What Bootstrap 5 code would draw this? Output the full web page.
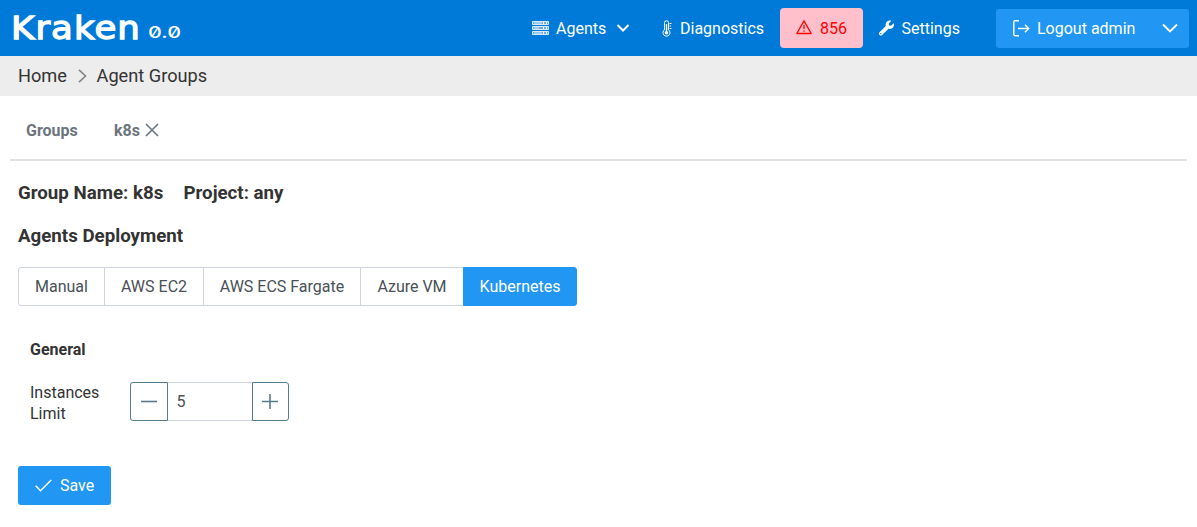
<!DOCTYPE html>
<html lang="en">
<head>
<meta charset="utf-8">
<title>Kraken</title>
<link href="https://cdn.jsdelivr.net/npm/bootstrap@5.3.0/dist/css/bootstrap.min.css" rel="stylesheet">
<style>
body{font-family:Roboto,sans-serif;font-size:16px;line-height:21px;color:#333;overflow:hidden}
svg{display:block;flex:none;fill:none;stroke:currentColor}
.topbar{height:56px;background:#007ad9;padding:0 8px 0 12px}
.brand-name{font:400 32px/40px "DejaVu Sans",sans-serif;-webkit-text-stroke:1.300px #fff;width:136px;letter-spacing:1px;transform:scaleX(1.11);transform-origin:0 50%;margin-left:-1px;margin-right:1px}
.brand-ver{font:500 16px/20px Inter,sans-serif;font-feature-settings:"zero";transform:scaleX(1.34);transform-origin:0 50%;margin-top:8px}
.it-agents{width:130px}.it-diag{width:118px}
.it-err{width:83px;height:40px;padding-left:16px;background:#ffc0cb;color:#f00;border-radius:4px}
.it-set{width:133px;padding-left:16px}
.logout{width:193px;height:39px;background:#2196f3;border-radius:3px;padding:0 11px 0 17px;color:#fff;border:0}
.crumbs{height:40px;background:#ededed;padding:0 0 2px 18px;font-size:18.2px}
.tabs-row{height:65px;margin:0 10px;border-bottom:2px solid #dee2e6;color:#6c757d;font-weight:700;padding:5px 0 0 16px}
.main-pane{padding:0 18px}
.headline{font-size:18.72px;font-weight:700;line-height:24px;margin:0}
.modes .btn{--bs-btn-border-radius:3px;height:39px;padding:0;font-size:16px;line-height:37px;border:1px solid #ced4da;color:#495057;flex:none}
.modes .btn.active{background:#2196f3;border-color:#2196f3;color:#fff}
.stepper{width:159px;height:39px}
.stepper .btn{width:38px;padding:0;border:1px solid #547c8c;color:#547c8c;display:flex;align-items:center;justify-content:center;border-radius:3px}
.stepper .form-control{border:1px solid #ced4da;border-width:1px 0;padding:0 9px;font-size:16px;color:#495057;height:39px}
.save{width:93px;height:39px;background:#2196f3;color:#fff;border-radius:3px;padding:0 0 0 17px;border:0;font-size:16px}
</style>
</head>
<body>
<nav class="topbar d-flex align-items-center text-white">
  <div class="brand-name">Kraken</div><div class="brand-ver">0.0</div>
  <div class="d-flex align-items-center ms-auto">
    <div class="it-agents d-flex align-items-center">
      <svg width="17" height="14" viewBox="0 0 17 14"><g stroke="#d9ebf9"><path d="M.5.5h16v3H.5zM.5 5.500h16v3H.5zM.5 10.500h16v3H.5z" fill="#65aee8"/><path d="M2 2h8M2 7h5M2 12h8" /><path d="M11 2h1M14 2h1M11 7h1M14 7h1M11 12h1M14 12h1" stroke="#fff" stroke-width="2"/></g></svg>
      <span style="margin-left:7px">Agents</span>
      <svg style="margin-left:10px" width="14" height="14" viewBox="0 0 14 14" stroke-width="2"><path d="M1.500 4 7 9.500l5.500-5.500"/></svg>
    </div>
    <div class="it-diag d-flex align-items-center">
      <svg width="11" height="17" viewBox="0 0 11 17"><path d="M2.500 9.800V2.700a2 2 0 0 1 4 0v7.100a3.500 3.500 0 1 1-4 0z"/><path d="M4.500 4v8" stroke-width="1.300"/><circle cx="4.500" cy="12.700" r="1.800" fill="#fff" stroke="none"/><path d="M7.500 3.500h2M7.500 6h1.500M7.500 8.500h2"/></svg>
      <span style="margin-left:7px">Diagnostics</span>
    </div>
    <div class="it-err d-flex align-items-center">
      <svg width="16" height="16" viewBox="0 0 16 16" stroke-width="1.300" stroke-linejoin="round"><path d="M8 .9.800 13.500h14.400z"/><path d="M8 5v4.200M8 10.500v1.300"/></svg>
      <span style="margin-left:8px">856</span>
    </div>
    <div class="it-set d-flex align-items-center">
      <svg width="15" height="16" viewBox="0 0 512 512" stroke="none"><path fill="#fff" stroke="none" d="M507.700 109.100c-2.200-9-13.500-12.100-20.100-5.500l-74.400 74.400-67.900-11.300-11.300-67.900 74.400-74.400c6.600-6.600 3.400-17.900-5.700-20.200-47.400-11.700-99.600.9-136.600 37.900-39.600 39.600-50.500 97.100-34.100 147.200L18.700 402.800c-25 25-25 65.500 0 90.500s65.500 25 90.500 0l213.200-213.200c50.100 16.700 107.500 5.700 147.400-34.200 37.100-37.100 49.700-89.300 37.900-136.800zM64 472a24 24 0 1 1 0-48 24 24 0 0 1 0 48z"/></svg>
      <span style="margin-left:7.500px">Settings</span>
    </div>
    <button class="logout d-flex align-items-center">
      <svg width="17" height="17" viewBox="0 0 17 17" stroke-width="1.400"><path d="M6 .8H2.200A1.400 1.400 0 0 0 .8 2.200v12.100a1.400 1.400 0 0 0 1.400 1.400H6M5 8.500h10.500M12 4.800l3.700 3.700-3.700 3.700"/></svg>
      <span style="margin-left:7px">Logout admin</span>
      <svg class="ms-auto" width="16" height="16" viewBox="0 0 16 16" stroke-width="1.900"><path d="M1 4.500l7 7 7-7"/></svg>
    </button>
  </div>
</nav>
<div class="crumbs d-flex align-items-center">
  <span>Home</span>
  <svg style="margin:2px 10px 0 10.600px" width="9" height="14" viewBox="0 0 9 14" stroke-width="1.600"><path d="M1 .8 7.500 7 1 13.200" stroke="#848484"/></svg>
  <span>Agent Groups</span>
</div>
<div class="tabs-row d-flex align-items-center">
  <span>Groups</span>
  <span style="margin-left:36.200px">k8s</span>
  <svg style="margin-left:5px" width="14" height="14" viewBox="0 0 14 14" stroke-width="1.600"><path d="m1 1 12 12M13 1 1 13"/></svg>
</div>
<main class="main-pane">
  <h3 class="headline d-flex" style="padding-top:20px"><span>Group Name: k8s</span><span style="margin-left:20.200px">Project: any</span></h3>
  <h3 class="headline" style="margin-top:19px">Agents Deployment</h3>
  <div class="modes btn-group d-flex" style="margin-top:19px">
    <button class="btn" style="width:87px">Manual</button>
    <button class="btn" style="width:100px">AWS EC2</button>
    <button class="btn" style="width:158px">AWS ECS Fargate</button>
    <button class="btn" style="width:104px">Azure VM</button>
    <button class="btn active" style="width:114px">Kubernetes</button>
  </div>
  <div style="padding:33px 0 0 12px">
    <div class="fw-bold">General</div>
    <div class="d-flex align-items-start" style="margin-top:22px">
      <label style="width:100px">Instances<br>Limit</label>
      <div class="stepper d-flex">
        <button class="btn rounded-end-0"><svg width="16" height="16" viewBox="0 0 16 16" stroke-width="1.600"><path d="M0 7.500h16"/></svg></button>
        <input class="form-control rounded-0" value="5" style="width:84px">
        <button class="btn rounded-start-0"><svg width="16" height="16" viewBox="0 0 16 16" stroke-width="1.600"><path d="M0 7.500h16M8 0v15"/></svg></button>
      </div>
    </div>
  </div>
  <button class="btn save d-flex align-items-center" style="margin-top:42px">
    <svg width="17" height="14" viewBox="0 0 17 14" stroke-width="1.500"><path d="m.7 6.800 4.800 4.900L16.200 1"/></svg>
    <span style="margin-left:8px">Save</span>
  </button>
</main>
<script src="https://cdn.jsdelivr.net/npm/bootstrap@5.3.0/dist/js/bootstrap.bundle.min.js"></script>
</body>
</html>
